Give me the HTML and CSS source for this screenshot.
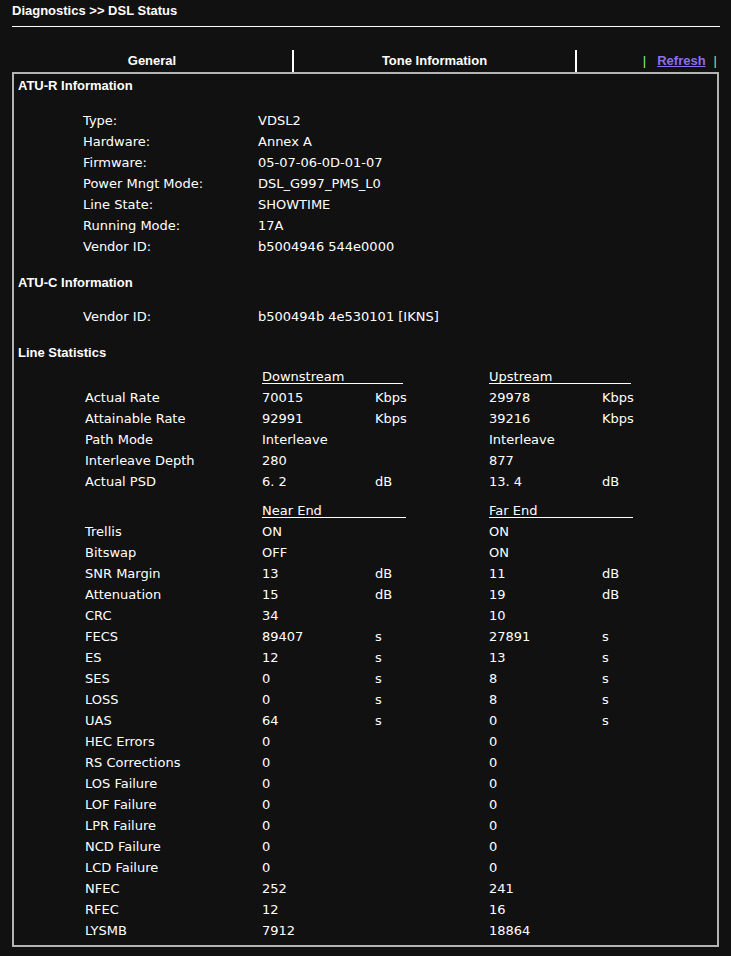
FILE: index.html
```html
<!DOCTYPE html>
<html>
<head>
<meta charset="utf-8">
<title>Diagnostics &gt;&gt; DSL Status</title>
<link rel="stylesheet" href="styles.css">
</head>
<body>
<div class="page">
  <div class="title">Diagnostics &gt;&gt; DSL Status</div>
  <div class="tabs">
    <div class="tab tab-sep">General</div>
    <div class="tab tab-sep tab2">Tone Information</div>
    <div class="tab-links"><span class="bar">|</span><a class="refresh" href="#">Refresh</a><span class="bar">|</span></div>
  </div>
  <div class="box">
    <div class="heading">ATU-R Information</div>
    <div class="info">
      <div>Type:</div><div>VDSL2</div>
      <div>Hardware:</div><div>Annex A</div>
      <div>Firmware:</div><div>05-07-06-0D-01-07</div>
      <div>Power Mngt Mode:</div><div>DSL_G997_PMS_L0</div>
      <div>Line State:</div><div>SHOWTIME</div>
      <div>Running Mode:</div><div>17A</div>
      <div>Vendor ID:</div><div>b5004946 544e0000</div>
    </div>
    <div class="heading">ATU-C Information</div>
    <div class="info info-c">
      <div>Vendor ID:</div><div>b500494b 4e530101 [IKNS]</div>
    </div>
    <div class="heading heading-ls">Line Statistics</div>
    <div class="stats">
      <div></div><div class="hdr hdr-ds">Downstream</div><div></div><div class="hdr hdr-us">Upstream</div><div></div>
      <div>Actual Rate</div><div>70015</div><div>Kbps</div><div>29978</div><div>Kbps</div>
      <div>Attainable Rate</div><div>92991</div><div>Kbps</div><div>39216</div><div>Kbps</div>
      <div>Path Mode</div><div>Interleave</div><div></div><div>Interleave</div><div></div>
      <div>Interleave Depth</div><div>280</div><div></div><div>877</div><div></div>
      <div>Actual PSD</div><div>6. 2</div><div>dB</div><div>13. 4</div><div>dB</div>
    </div>
    <div class="stats stats2">
      <div></div><div class="hdr hdr-ne">Near End</div><div></div><div class="hdr hdr-fe">Far End</div><div></div>
      <div>Trellis</div><div>ON</div><div></div><div>ON</div><div></div>
      <div>Bitswap</div><div>OFF</div><div></div><div>ON</div><div></div>
      <div>SNR Margin</div><div>13</div><div>dB</div><div>11</div><div>dB</div>
      <div>Attenuation</div><div>15</div><div>dB</div><div>19</div><div>dB</div>
      <div>CRC</div><div>34</div><div></div><div>10</div><div></div>
      <div>FECS</div><div>89407</div><div>s</div><div>27891</div><div>s</div>
      <div>ES</div><div>12</div><div>s</div><div>13</div><div>s</div>
      <div>SES</div><div>0</div><div>s</div><div>8</div><div>s</div>
      <div>LOSS</div><div>0</div><div>s</div><div>8</div><div>s</div>
      <div>UAS</div><div>64</div><div>s</div><div>0</div><div>s</div>
      <div>HEC Errors</div><div>0</div><div></div><div>0</div><div></div>
      <div>RS Corrections</div><div>0</div><div></div><div>0</div><div></div>
      <div>LOS Failure</div><div>0</div><div></div><div>0</div><div></div>
      <div>LOF Failure</div><div>0</div><div></div><div>0</div><div></div>
      <div>LPR Failure</div><div>0</div><div></div><div>0</div><div></div>
      <div>NCD Failure</div><div>0</div><div></div><div>0</div><div></div>
      <div>LCD Failure</div><div>0</div><div></div><div>0</div><div></div>
      <div>NFEC</div><div>252</div><div></div><div>241</div><div></div>
      <div>RFEC</div><div>12</div><div></div><div>16</div><div></div>
      <div>LYSMB</div><div>7912</div><div></div><div>18864</div><div></div>
    </div>
  </div>
</div>
</body>
</html>
```
FILE: styles.css
```css
html, body {
  margin: 0;
  padding: 0;
  background: #111111;
  color: #ffffff;
}
body {
  font-family: "DejaVu Sans", Verdana, sans-serif;
  font-size: 13px;
}
.page {
  width: 708px;
  padding-left: 12px;
}
.title {
  height: 26px;
  line-height: 22px;
  border-bottom: 1px solid #ffffff;
  font-family: "Liberation Sans", Arial, sans-serif;
  font-weight: bold;
  font-size: 13px;
}
.tabs {
  display: flex;
  margin-top: 23px;
  height: 22px;
  font-family: "Liberation Sans", Arial, sans-serif;
  font-weight: bold;
  font-size: 13px;
}
.tab {
  width: 280px;
  text-align: center;
  line-height: 22px;
}
.tab-sep {
  border-right: 2px solid #ffffff;
}
.tab2 {
  width: 281px;
}
.tab-links {
  flex: 1;
  display: flex;
  justify-content: flex-end;
  align-items: center;
  line-height: 22px;
  padding-right: 3px;
}
.bar {
  color: #8cf08c;
  font-weight: normal;
}
.refresh {
  color: #8d6df2;
  text-decoration: underline;
  margin: 0 8px 0 11px;
}
.box {
  width: 707px;
  box-sizing: border-box;
  border: 2px solid #b4b4b4;
  padding: 2px 0 4px 0;
}
.heading {
  height: 21px;
  line-height: 19px;
  padding-left: 4px;
  font-family: "Liberation Sans", Arial, sans-serif;
  font-weight: bold;
  font-size: 13px;
}
.info {
  display: grid;
  grid-template-columns: 175px 1fr;
  grid-auto-rows: 21px;
  align-items: center;
  padding-left: 69px;
  margin: 13px 0 16px;
}
.info-c {
  margin: 12px 0 16px;
}
.heading-ls {
  margin-bottom: 2px;
}
.stats {
  display: grid;
  grid-template-columns: 177px 113px 114px 113px 1fr;
  grid-auto-rows: 21px;
  align-items: center;
  padding-left: 71px;
}
.stats2 {
  margin-top: 8px;
}
.hdr {
  height: 14px;
  line-height: 15px;
  border-bottom: 1px solid #ffffff;
}
.hdr-ds { width: 141px; }
.hdr-us { width: 142px; }
.hdr-ne { width: 144px; }
.hdr-fe { width: 144px; }
```
